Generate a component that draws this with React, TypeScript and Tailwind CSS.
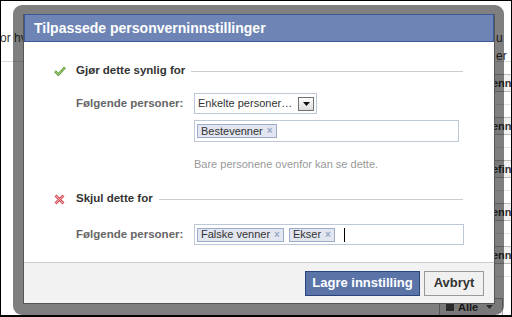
import React from "react";

function CheckIcon() {
  return (
    <svg width="12" height="10" viewBox="0 0 12 10">
      <path
        d="M1 5.2 L4.3 8.6 L11 1.4"
        fill="none"
        stroke="#5f9a38"
        strokeWidth="2.6"
        strokeLinejoin="round"
      />
      <path
        d="M1 5.2 L4.3 8.6 L11 1.4"
        fill="none"
        stroke="#bfe39a"
        strokeWidth="0.9"
      />
    </svg>
  );
}

function CrossIcon() {
  return (
    <svg width="11" height="11" viewBox="0 0 11 11">
      <path d="M1.5 1.5 L9.5 9.5 M9.5 1.5 L1.5 9.5" stroke="#d7545e" strokeWidth="2.8" />
      <path d="M1.5 1.5 L9.5 9.5 M9.5 1.5 L1.5 9.5" stroke="#f4b8bd" strokeWidth="0.9" />
    </svg>
  );
}

function Token({ label }: { label: string }) {
  return (
    <span className="flex items-center h-[14px] px-[3px] bg-[#e2e6f0] border border-[#9dacca] text-[11px] leading-none text-[#333]">
      {label}
      <span className="ml-[4px] text-[10px] text-[#98a6c4] font-bold">×</span>
    </span>
  );
}

function Heading({ icon, text }: { icon: React.ReactNode; text: string }) {
  return (
    <div className="flex items-center h-[14px] pl-[30px] pr-[31px]">
      <div className="w-[22px] flex items-center">{icon}</div>
      <span className="text-[11.5px] font-bold text-[#333] whitespace-nowrap">
        {text}
      </span>
      <div className="flex-1 ml-[6px] h-px bg-[#ccc]" />
    </div>
  );
}

const pageRows = ["Venner", "Venner", "Definer", "Venner", "Venner"];

export default function App() {
  return (
    <div
      className="relative w-[512px] h-[317px] overflow-hidden bg-white border border-b-2 border-black"
      style={{ fontFamily: '"Liberation Sans", Arial, sans-serif' }}
    >
      {/* page under the dialog */}
      <div className="h-full flex flex-col">
        <div className="h-[61px] border-b border-[#ddd] flex justify-between pt-[28px] text-[12px] text-[#333]">
          <span className="-ml-[1px]">or hvem</span>
          <span className="pl-[495px] absolute">u er</span>
        </div>
        <div className="flex-1 flex justify-end">
          <div className="w-[20px] flex flex-col">
            {pageRows.map((r, i) => (
              <div
                key={i}
                className="h-[43px] border-b border-[#e5e5e5] flex items-center"
              >
                <span className="ml-[-2px] px-[2px] h-[18px] flex items-center bg-[#f2f2f2] border border-[#bbb] text-[11px] font-bold text-[#333] whitespace-nowrap">
                  {r === "Definer" ? "efin" : "enn"}
                </span>
              </div>
            ))}
          </div>
        </div>
      </div>

      {/* "Alle" button under overlay */}
      <div className="absolute left-[438px] top-[297px] w-[64px] h-[18px] bg-[#f2f2f2] border border-[#aaa] flex items-center pl-[6px] gap-[4px] text-[11px] font-bold text-[#333]">
        <span className="w-[8px] h-[8px] bg-[#555]" />
        Alle
        <svg width="7" height="4" viewBox="0 0 7 4" className="ml-[4px]">
          <path d="M0 0 H7 L3.5 4 Z" fill="#555" />
        </svg>
      </div>

      {/* overlay frame */}
      <div className="absolute left-[12px] top-[4px] w-[491px] h-[310px] rounded-[9px] bg-black/50 pl-[10px] pt-[9px] pr-[9px] pb-[11px]">
        <div className="h-full flex flex-col bg-white border border-[#555] border-t-0">
          <div className="h-[28px] bg-[#6d84b4] border border-[#3b5998] flex items-center px-[9px]">
            <span className="text-[14px] font-bold text-white">
              Tilpassede personverninnstillinger
            </span>
          </div>

          <div className="h-[220px] pt-[22px]">
            <Heading icon={<CheckIcon />} text="Gjør dette synlig for" />

            <div className="flex mt-[15px] pl-[52px]">
              <div className="w-[118px] h-[21px] flex items-center text-[11.5px] font-bold text-[#666]">
                Følgende personer:
              </div>
              <div className="flex flex-col">
                <div className="w-[123px] h-[21px] border border-[#bdc7d8] flex items-center justify-between pl-[3px] pr-[2px]">
                  <span className="text-[11px] text-[#333]">Enkelte personer…</span>
                  <span className="w-[16px] h-[14px] border border-[#707070] bg-gradient-to-b from-white to-[#dcdcdc] flex items-center justify-center">
                    <svg width="7" height="4" viewBox="0 0 7 4">
                      <path d="M0 0 H7 L3.5 4 Z" fill="#111" />
                    </svg>
                  </span>
                </div>
                <div className="mt-[6px] w-[265px] h-[22px] border border-[#bdc7d8] flex items-center pl-[2px] gap-[5px]">
                  <Token label="Bestevenner" />
                </div>
                <div className="mt-[15px] h-[14px] flex items-center text-[11px] text-[#999]">
                  Bare personene ovenfor kan se dette.
                </div>
              </div>
            </div>

            <div className="mt-[21px]">
              <Heading icon={<CrossIcon />} text="Skjul dette for" />
            </div>

            <div className="flex mt-[18px] pl-[52px]">
              <div className="w-[118px] h-[21px] flex items-center text-[11.5px] font-bold text-[#666]">
                Følgende personer:
              </div>
              <div className="w-[270px] h-[21px] border border-[#bdc7d8] flex items-center pl-[2px] gap-[5px]">
                <Token label="Falske venner" />
                <Token label="Ekser" />
                <span className="ml-[4px] w-px h-[14px] bg-black" />
              </div>
            </div>
          </div>

          <div className="flex-1 bg-[#f2f2f2] border-t border-[#ccc] flex items-center justify-end gap-[4px] pr-[10px]">
            <button className="w-[115px] h-[25px] bg-[#5b74a8] border border-[#29447e] text-[13px] font-bold text-white">
              Lagre innstilling
            </button>
            <button className="w-[60px] h-[25px] bg-[#f0f0f0] border border-[#999] text-[13px] font-bold text-[#333]">
              Avbryt
            </button>
          </div>
        </div>
      </div>
    </div>
  );
}
